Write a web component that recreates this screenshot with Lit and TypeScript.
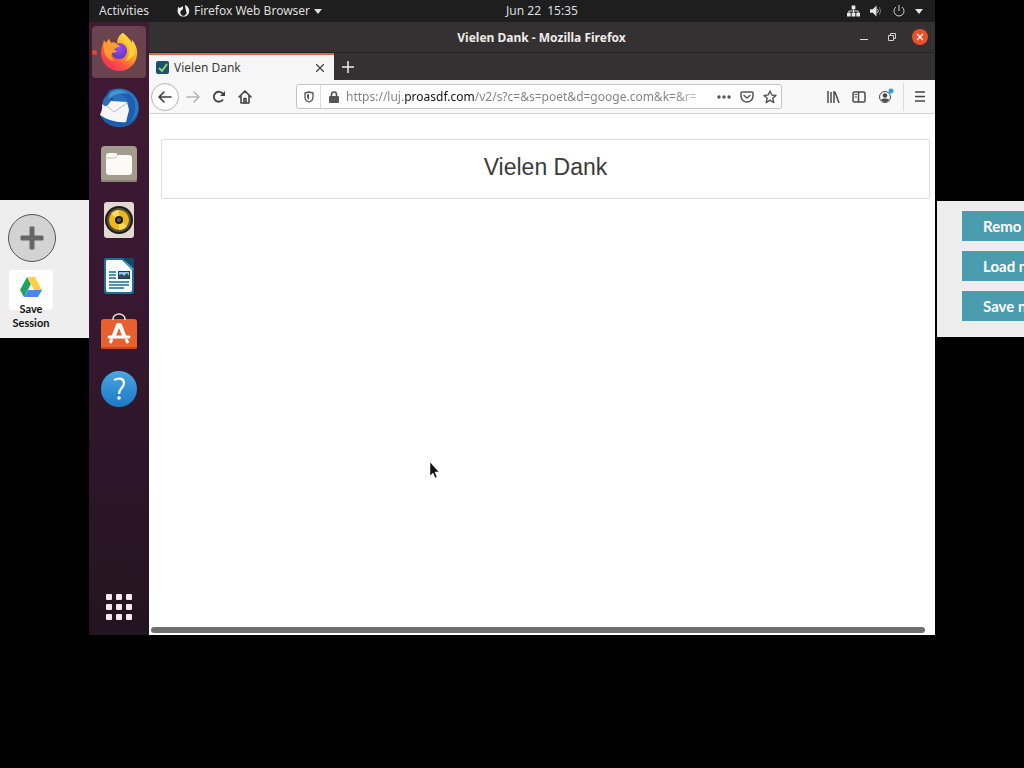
import { LitElement, html, css } from 'lit';
import { customElement, property } from 'lit/decorators.js';

const firefoxIcon = html`
  <svg width="40" height="40" viewBox="0 0 40 40" aria-hidden="true">
    <defs>
      <linearGradient id="fx-body" x1="0.85" y1="0.05" x2="0.2" y2="0.95">
        <stop offset="0" stop-color="#fff04a" />
        <stop offset="0.4" stop-color="#ffa32b" />
        <stop offset="0.7" stop-color="#ff5a3c" />
        <stop offset="1" stop-color="#f42a63" />
      </linearGradient>
      <radialGradient id="fx-globe" cx="0.5" cy="0.3" r="0.7">
        <stop offset="0" stop-color="#a04bf0" />
        <stop offset="1" stop-color="#5a3bbf" />
      </radialGradient>
    </defs>
    <path d="M24 1C28 4 31 8 33 11C33 9 33 8 32 7C36 11 39 17 38 23C37 33 29 39 20 39C10 39 2 31 2 21C2 16 4 12 5 8L7 11C8 9 9 8 10 7L12 11C15 10 17 11 18 12C18 7 20 3 24 1Z" fill="url(#fx-body)" />
    <circle cx="20" cy="19" r="8" fill="url(#fx-globe)" />
    <path d="M5 9L7 11L10 7L12 11C16 10 19 12 21 15C18 15 16 16 15 18L18 19C17 21 15 20 13 21C11 24 13 27 16 29C8 29 3 21 5 9Z" fill="#ff9a2e" />
    <path d="M24 1C22 7 28 11 30 16C31 20 30 25 26 29C33 28 38 22 35 13L33 11C31 8 28 4 24 1Z" fill="#ffd03a" />
  </svg>
`;

const thunderbirdIcon = html`
  <svg width="42" height="42" viewBox="0 0 42 42" aria-hidden="true">
    <path d="M11 4C14 2 20 1 25 2C34 3 41 11 41 21C41 31 34 39 25 40C15 41 6 37 2 28C6 29 4 14 11 4Z" fill="#1d5fae" />
    <path d="M11 4C19 1 30 3 35 11C39 18 38 28 32 35C39 30 42 22 39 14C35 4 23 -1 11 4Z" fill="#2b7cc6" />
    <path d="M4 20C4 13 7 8 13 6C21 4 29 9 31 18L29 34C20 36 10 31 4 20Z" fill="#2a6fb8" />
    <path d="M4 17C6 19 8 20 10 18L13 14L29 15L31 23L28 35C20 36 9 33 2 28C3 25 5 22 4 17Z" fill="#f7f7f8" />
    <path d="M9 19L16 25L29 16" fill="none" stroke="#b4bac6" stroke-width="1" />
    <path d="M12 6C16 2 25 2 30 7C24 5 17 7 10 12Z" fill="#4392d4" />
    <circle cx="14" cy="12" r="1" fill="#17407c" />
  </svg>
`;

const filesIcon = html`
  <svg width="38" height="38" viewBox="0 0 38 38" aria-hidden="true">
    <rect x="1" y="1" width="36" height="36" rx="4" fill="#a39b8b" />
    <rect x="1" y="35" width="36" height="2" rx="1" fill="#8c8577" />
    <path d="M6 11A3 3 0 0 1 9 8H16L18 10H29A3 3 0 0 1 32 13V27A3 3 0 0 1 29 30H9A3 3 0 0 1 6 27Z" fill="#fbfaf6" />
    <path d="M6 13H15L18 10" fill="none" stroke="#c9c3b6" stroke-width="1" />
  </svg>
`;

const rhythmboxIcon = html`
  <svg width="38" height="38" viewBox="0 0 38 38" aria-hidden="true">
    <rect x="4" y="1" width="30" height="36" rx="3" fill="#e3d9d3" />
    <circle cx="19" cy="19" r="14" fill="#1d1c1e" />
    <circle cx="19" cy="19" r="12" fill="#5a5134" />
    <circle cx="19" cy="19" r="10" fill="#efb71d" />
    <path d="M19 19L11 13A10 10 0 0 1 19 9Z" fill="#f8dc55" />
    <path d="M19 19L27 25A10 10 0 0 1 19 29Z" fill="#f8dc55" />
    <circle cx="19" cy="19" r="4" fill="#1d1c1e" />
    <circle cx="19" cy="19" r="2" fill="#55565c" />
  </svg>
`;

const writerIcon = html`
  <svg width="38" height="38" viewBox="0 0 38 38" aria-hidden="true">
    <path d="M6 1H24L34 12V34A3 3 0 0 1 31 37H7A3 3 0 0 1 4 34V3A2 2 0 0 1 6 1Z" fill="#1b7296" />
    <path d="M7 3H22L32 13V33A2 2 0 0 1 30 35H8A2 2 0 0 1 6 33V4Z" fill="#f6fafb" />
    <path d="M22 1H33A1 1 0 0 1 34 2V12Z" fill="#0f4a67" />
    <path d="M22 1L34 12L32 13Z" fill="#4ba5c4" />
    <path d="M9 15H16M9 18H16M9 21H16M9 25H29M9 28H29M9 31H24" stroke="#1a6f95" stroke-width="1.5" />
    <rect x="18" y="14" width="12" height="8" fill="#1c3f55" />
    <rect x="19" y="15" width="10" height="6" fill="#8fc6dd" />
    <path d="M19 21V18L22 17L24 19L27 16L29 19V21Z" fill="#2b4a5d" />
  </svg>
`;

const softwareIcon = html`
  <svg width="38" height="38" viewBox="0 0 38 38" aria-hidden="true">
    <rect x="1" y="6" width="36" height="30" rx="3" fill="#e9602f" />
    <rect x="1" y="34" width="36" height="2" rx="1" fill="#c64a20" />
    <path d="M13 7V6A6 5 0 0 1 25 6V7" fill="none" stroke="#f5e3dc" stroke-width="1.5" />
    <path d="M13 25L18 12H20L25 25" fill="none" stroke="#fff" stroke-width="4" stroke-linejoin="round" />
    <path d="M9 24H29" stroke="#fff" stroke-width="3" stroke-linecap="round" />
    <path d="M10 30L12 26M28 30L26 26" stroke="#fff" stroke-width="3" />
  </svg>
`;

const helpIcon = html`
  <svg width="38" height="38" viewBox="0 0 38 38" aria-hidden="true">
    <defs>
      <linearGradient id="help-bg" x1="0" y1="0" x2="0" y2="1">
        <stop offset="0" stop-color="#4aa6e4" />
        <stop offset="1" stop-color="#1c78c4" />
      </linearGradient>
    </defs>
    <circle cx="19" cy="20" r="18" fill="url(#help-bg)" />
    <path d="M14 11C20 8 24 10 24 14C24 19 19 19 19 25" fill="none" stroke="#fff" stroke-width="2.2" />
    <circle cx="19" cy="29" r="1.8" fill="#fff" />
  </svg>
`;

const appsIcon = html`
  <svg width="26" height="26" viewBox="0 0 26 26" fill="#f4eaf2" aria-hidden="true">
    <rect x="0" y="0" width="6" height="6" rx="1" /><rect x="10" y="0" width="6" height="6" rx="1" /><rect x="20" y="0" width="6" height="6" rx="1" />
    <rect x="0" y="10" width="6" height="6" rx="1" /><rect x="10" y="10" width="6" height="6" rx="1" /><rect x="20" y="10" width="6" height="6" rx="1" />
    <rect x="0" y="20" width="6" height="6" rx="1" /><rect x="10" y="20" width="6" height="6" rx="1" /><rect x="20" y="20" width="6" height="6" rx="1" />
  </svg>
`;

const dockItems = [
  { label: 'Firefox Web Browser', icon: firefoxIcon, active: true },
  { label: 'Thunderbird Mail', icon: thunderbirdIcon },
  { label: 'Files', icon: filesIcon },
  { label: 'Rhythmbox', icon: rhythmboxIcon },
  { label: 'LibreOffice Writer', icon: writerIcon },
  { label: 'Ubuntu Software', icon: softwareIcon },
  { label: 'Help', icon: helpIcon },
];

const buttonReset = css`
  * {
    box-sizing: border-box;
  }
  button {
    display: flex;
    align-items: center;
    justify-content: center;
    margin: 0;
    padding: 0;
    border: 0;
    background: none;
    color: inherit;
    font: inherit;
  }
  svg {
    display: block;
    flex: none;
  }
`;

@customElement('top-bar')
class TopBar extends LitElement {
  static styles = [
    buttonReset,
    css`
      :host {
        display: grid;
        grid-template-columns: 60px minmax(0, 1fr) auto minmax(0, 1fr);
        align-items: center;
        height: 22px;
        background: #1e1e1e;
        color: #dedede;
        font-size: 12px;
        line-height: 20px;
      }
      .menus {
        grid-column: 1 / 3;
        grid-row: 1;
        display: flex;
        gap: 28px;
        padding-left: 10px;
      }
      .app-menu {
        gap: 4px;
      }
      .clock {
        grid-column: 3;
        white-space: pre;
      }
      .status {
        justify-self: end;
        gap: 10px;
        padding-right: 12px;
      }
    `,
  ];

  render() {
    return html`
      <div class="menus">
        <button>Activities</button>
        <button class="app-menu">
          <svg width="13" height="13" viewBox="0 0 13 13" aria-hidden="true">
            <path d="M1 2L3 3L6 1L6 4L5 5A3 3 0 1 0 9 6C9 4 8 3 8 0C11 1 13 4 12 8A6 6 0 0 1 1 8C0 6 1 4 1 2Z" fill="#eee" />
          </svg>
          Firefox Web Browser
          <svg width="8" height="5" viewBox="0 0 8 5" aria-hidden="true"><path d="M0 0H8L4 5Z" fill="#dedede" /></svg>
        </button>
      </div>
      <button class="clock">Jun 22  15:35</button>
      <button class="status" aria-label="System menu">
        <svg width="13" height="12" viewBox="0 0 14 12" fill="#e6e6e6" aria-hidden="true">
          <path d="M5 0H9V4H5ZM0 8H4V12H0ZM5 8H9V12H5ZM10 8H14V12H10Z" />
          <path d="M7 4V8M2 8V6H12V8" fill="none" stroke="#e6e6e6" />
        </svg>
        <svg width="13" height="12" viewBox="0 0 14 12" aria-hidden="true">
          <path d="M0 4H3L7 0V12L3 8H0Z" fill="#e6e6e6" />
          <path d="M8 4Q10 6 8 8" fill="none" stroke="#e6e6e6" />
          <path d="M10 2Q13 6 10 10" fill="none" stroke="#777" />
        </svg>
        <svg width="12" height="12" viewBox="0 0 12 12" fill="none" stroke="#d0d0d0" aria-hidden="true">
          <path d="M3 2A5 5 0 1 0 9 2M6 0V6" />
        </svg>
        <svg width="8" height="5" viewBox="0 0 8 5" aria-hidden="true"><path d="M0 0H8L4 5Z" fill="#e6e6e6" /></svg>
      </button>
    `;
  }
}

@customElement('side-dock')
class SideDock extends LitElement {
  static styles = [
    buttonReset,
    css`
      :host {
        display: flex;
        flex-direction: column;
        justify-content: space-between;
        align-items: center;
        padding: 2px 0 15px;
        background: linear-gradient(#421a34, #35172f 50%, #231421);
      }
      .apps {
        display: flex;
        flex-direction: column;
      }
      .item {
        position: relative;
        width: 54px;
        height: 52px;
        margin: 2px 0;
        border-radius: 4px;
      }
      .active {
        background: #69444f;
      }
      .active::before {
        content: '';
        position: absolute;
        left: 0;
        top: 24px;
        width: 5px;
        height: 5px;
        border-radius: 50%;
        background: #dd4b2d;
      }
    `,
  ];

  render() {
    return html`
      <div class="apps">
        ${dockItems.map(
          (item) => html`
            <button class="item ${item.active ? 'active' : ''}" aria-label=${item.label}>${item.icon}</button>
          `
        )}
      </div>
      <button aria-label="Show Applications">${appsIcon}</button>
    `;
  }
}

@customElement('browser-window')
class BrowserWindow extends LitElement {
  @property() title = '';
  @property() url = '';

  static styles = [
    buttonReset,
    css`
      :host {
        display: flex;
        flex-direction: column;
        min-width: 0;
        background: #fff;
        font-size: 12px;
      }
      .titlebar {
        display: grid;
        grid-template-columns: 1fr auto 1fr;
        align-items: center;
        height: 31px;
        padding-right: 1px;
        border-bottom: 1px solid #262324;
        background: #343132;
        color: #eeecea;
      }
      .window-title {
        grid-column: 2;
        font-weight: 700;
      }
      .window-buttons {
        justify-self: end;
        display: flex;
      }
      .window-buttons button {
        width: 28px;
        height: 28px;
      }
      .tabs {
        display: flex;
        height: 27px;
        background: #343132;
      }
      .tab {
        display: flex;
        align-items: center;
        width: 185px;
        padding: 0 2px 0 7px;
        border-top: 2px solid #e8643a;
        background: #f6f6f6;
        color: #3c3c3c;
      }
      .tab-label {
        flex: 1;
        justify-content: flex-start;
        gap: 5px;
      }
      .tab-close {
        width: 24px;
        height: 24px;
      }
      .new-tab {
        width: 28px;
      }
      .toolbar {
        display: flex;
        align-items: center;
        height: 34px;
        padding: 0 2px;
        border-bottom: 1px solid #d2d2d2;
        background: #f8f8f8;
        color: #444;
      }
      .tool {
        width: 26px;
        height: 26px;
      }
      .back {
        width: 28px;
        height: 28px;
        margin-right: 1px;
        border: 1px solid #b4b4b4;
        border-radius: 50%;
        background: #fff;
      }
      .separator {
        width: 1px;
        height: 28px;
        margin: 0 3px 0 5px;
        background: #dcdcdc;
      }
      .urlbar {
        flex: 1;
        display: flex;
        align-items: center;
        min-width: 0;
        height: 25px;
        margin: 0 38px;
        border: 1px solid #c4c4c4;
        border-radius: 3px;
        background: #fff;
      }
      .shield {
        width: 24px;
        height: 23px;
        border-right: 1px solid #dcdcdc;
      }
      .lock {
        width: 25px;
      }
      .action {
        width: 23px;
        height: 23px;
      }
      .address {
        flex: 1;
        min-width: 0;
        height: 23px;
        padding: 0;
        border: 0;
        outline: 0;
        font-family: inherit;
        font-size: 12px;
        -webkit-text-fill-color: transparent;
        /* the host name is darker and the tail fades out */
        background: linear-gradient(
          90deg,
          #808080 59px,
          #111 59px,
          #111 129px,
          #808080 129px,
          #808080 calc(100% - 36px),
          transparent
        );
        background-clip: text;
        -webkit-background-clip: text;
      }
      .page {
        flex: 1;
        padding: 25px 5px 0 12px;
      }
      .card {
        padding: 12px 0 16px;
        border: 1px solid #ddd;
        border-radius: 2px;
        text-align: center;
      }
      .heading {
        margin: 0;
        color: #3a3a3a;
        font: 400 23px/30px 'Liberation Sans', Arial, sans-serif;
      }
      .scroll-track {
        display: flex;
        padding: 0 10px 2px 2px;
      }
      .thumb {
        flex: 1;
        height: 6px;
        border-radius: 3px;
        background: #6f6f6f;
      }
    `,
  ];

  render() {
    return html`
      <header class="titlebar">
        <span class="window-title">${this.title} - Mozilla Firefox</span>
        <div class="window-buttons">
          <button aria-label="Minimize">
            <svg width="8" height="8" viewBox="0 0 8 8"><path d="M0 6H8V7H0Z" fill="#ddd" /></svg>
          </button>
          <button aria-label="Restore">
            <svg width="8" height="8" viewBox="0 0 8 8" fill="none" stroke="#d0d0d0">
              <path d="M0.5 2.5H5.5V7.5H0.5ZM2.5 2.5V0.5H7.5V5.5H5.5" />
            </svg>
          </button>
          <button aria-label="Close">
            <svg width="16" height="16" viewBox="0 0 16 16">
              <circle cx="8" cy="8" r="8" fill="#e95028" />
              <path d="M5 5L11 11M11 5L5 11" stroke="#fff" stroke-width="1.3" />
            </svg>
          </button>
        </div>
      </header>
      <div class="tabs">
        <div class="tab">
          <button class="tab-label">
            <svg width="13" height="13" viewBox="0 0 13 13" aria-hidden="true">
              <rect width="13" height="13" rx="2" fill="#1f4f6e" />
              <path d="M3 7L6 10L11 3" fill="none" stroke="#7ddc6a" stroke-width="2" />
            </svg>
            ${this.title}
          </button>
          <button class="tab-close" aria-label="Close tab">
            <svg width="8" height="8" viewBox="0 0 8 8"><path d="M0 0L8 8M8 0L0 8" stroke="#444" stroke-width="1.3" /></svg>
          </button>
        </div>
        <button class="new-tab" aria-label="New tab">
          <svg width="12" height="12" viewBox="0 0 12 12"><path d="M6 0V12M0 6H12" stroke="#eee" stroke-width="1.5" /></svg>
        </button>
      </div>
      <nav class="toolbar">
        <button class="back" aria-label="Back">
          <svg width="14" height="12" viewBox="0 0 14 12" fill="none" stroke="#3c3c3c" stroke-width="1.6" stroke-linecap="round" stroke-linejoin="round">
            <path d="M13 6H1M6 1L1 6L6 11" />
          </svg>
        </button>
        <button class="tool" aria-label="Forward">
          <svg width="14" height="12" viewBox="0 0 14 12" fill="none" stroke="#b5b5b5" stroke-width="1.6" stroke-linecap="round" stroke-linejoin="round">
            <path d="M1 6H13M8 1L13 6L8 11" />
          </svg>
        </button>
        <button class="tool" aria-label="Reload">
          <svg width="14" height="14" viewBox="0 0 14 14" fill="none" stroke="#444" stroke-width="1.8">
            <path d="M11 9.5A5 5 0 1 1 11 4" />
            <path d="M13 1V6H8Z" fill="#444" stroke="none" />
          </svg>
        </button>
        <button class="tool" aria-label="Home">
          <svg width="14" height="14" viewBox="0 0 14 14" fill="none" stroke="#444" stroke-width="1.6" stroke-linecap="round" stroke-linejoin="round">
            <path d="M1 7L7 1L13 7M3 6V13H11V6" />
            <path d="M6 13V8.5H8V13" />
          </svg>
        </button>
        <div class="urlbar">
          <button class="shield" aria-label="Tracking protection">
            <svg width="10" height="12" viewBox="0 0 10 12" fill="none" stroke="#555" stroke-width="1.3" stroke-linejoin="round">
              <path d="M5 1L9 2V6C9 8 8 10 5 11C2 10 1 8 1 6V2Z" />
              <path d="M5 3V9C4 8 3 7 3 6V3.5Z" fill="#555" stroke="none" />
            </svg>
          </button>
          <button class="lock" aria-label="Site information">
            <svg width="10" height="12" viewBox="0 0 10 12">
              <rect y="5" width="10" height="7" rx="1" fill="#555" />
              <path d="M2.5 6V3.5A2.5 2.5 0 0 1 7.5 3.5V6" fill="none" stroke="#555" stroke-width="1.6" />
            </svg>
          </button>
          <input class="address" type="text" aria-label="Address" .value=${this.url} />
          <button class="action" aria-label="Page actions">
            <svg width="14" height="4" viewBox="0 0 14 4" fill="#555"><circle cx="2" cy="2" r="1.7" /><circle cx="7" cy="2" r="1.7" /><circle cx="12" cy="2" r="1.7" /></svg>
          </button>
          <button class="action" aria-label="Save to Pocket">
            <svg width="14" height="12" viewBox="0 0 14 12" fill="none" stroke="#555" stroke-width="1.5" stroke-linecap="round" stroke-linejoin="round">
              <path d="M2 1H12A1 1 0 0 1 13 2V5A6 6 0 0 1 1 5V2A1 1 0 0 1 2 1Z" />
              <path d="M4 4.5L7 7L10 4.5" />
            </svg>
          </button>
          <button class="action" aria-label="Bookmark this page">
            <svg width="14" height="14" viewBox="0 0 14 14" fill="none" stroke="#555" stroke-width="1.4" stroke-linejoin="round">
              <path d="M7 1L8.8 5L13 5.4L9.8 8.2L10.8 12.6L7 10.2L3.2 12.6L4.2 8.2L1 5.4L5.2 5Z" />
            </svg>
          </button>
        </div>
        <button class="tool" aria-label="Library">
          <svg width="14" height="12" viewBox="0 0 14 12" fill="none" stroke="#4a4a4a" stroke-width="1.5"><path d="M2 0V12M5 1V12M8 0V12M9 1L13 12" /></svg>
        </button>
        <button class="tool" aria-label="Sidebars">
          <svg width="14" height="12" viewBox="0 0 14 12" fill="none" stroke="#4a4a4a" stroke-width="1.5">
            <rect x="1" y="1" width="12" height="10" rx="1.5" />
            <path d="M6.5 1V11" /><path d="M2.5 3.5H5M2.5 6H5" stroke-width="1" />
          </svg>
        </button>
        <button class="tool" aria-label="Account">
          <svg width="18" height="18" viewBox="0 0 18 18">
            <circle cx="9" cy="9" r="5.5" fill="none" stroke="#4a4a4a" />
            <circle cx="9" cy="7.5" r="2.3" fill="#4a4a4a" />
            <path d="M5 12C6 10 12 10 13 12C11 14.5 7 14.5 5 12Z" fill="#4a4a4a" />
            <circle cx="15" cy="3" r="2.5" fill="#25a5e0" />
          </svg>
        </button>
        <span class="separator"></span>
        <button class="tool" aria-label="Open menu">
          <svg width="10" height="11" viewBox="0 0 10 11"><path d="M0 1H10M0 5.5H10M0 10H10" stroke="#444" stroke-width="1.5" /></svg>
        </button>
      </nav>
      <main class="page">
        <div class="card"><h1 class="heading">${this.title}</h1></div>
      </main>
      <div class="scroll-track"><div class="thumb"></div></div>
    `;
  }
}

@customElement('app-root')
class AppRoot extends LitElement {
  static styles = [
    buttonReset,
    css`
      :host {
        display: grid;
        grid-template-columns: 89px minmax(0, 1fr) 87px;
        align-items: start;
        min-height: 100vh;
        overflow: hidden;
        background: #000;
        font-family: 'Noto Sans', 'Open Sans', sans-serif;
      }
      .session {
        margin-top: 200px;
        padding: 14px 8px 8px;
        background: #eee;
        color: #111;
        font: 700 11px/14px Lato, sans-serif;
      }
      .add {
        width: 48px;
        height: 48px;
        border: 1px solid #555;
        border-radius: 50%;
        background: #d3d3d3;
      }
      .save {
        flex-direction: column;
        width: 46px;
        margin-top: 8px;
      }
      .drive {
        display: grid;
        place-items: center;
        width: 44px;
        height: 40px;
        margin-bottom: -8px;
        padding-bottom: 6px;
        border-radius: 3px;
        background: #fff;
      }
      .desktop {
        position: relative;
        display: grid;
        grid-template: auto 1fr / 60px minmax(0, 1fr);
        aspect-ratio: 4 / 3;
        margin-right: 2px;
      }
      .bar {
        grid-column: 1 / 3;
      }
      .cursor {
        position: absolute;
        left: 340px;
        top: 461px;
      }
      .actions {
        display: flex;
        flex-direction: column;
        gap: 10px;
        margin-top: 201px;
        padding: 10px 0 16px 25px;
        overflow: hidden;
        background: #eee;
      }
      .action {
        justify-content: flex-start;
        height: 30px;
        padding-left: 21px;
        overflow: hidden;
        background: #4b9cae;
        color: #fff;
        font: 700 15px/20px Lato, sans-serif;
        white-space: nowrap;
      }
    `,
  ];

  render() {
    return html`
      <aside class="session">
        <button class="add" aria-label="Add">
          <svg width="24" height="24" viewBox="0 0 24 24"><path d="M10 1H14V10H23V14H14V23H10V14H1V10H10Z" fill="#666" stroke="#666" stroke-linejoin="round" /></svg>
        </button>
        <button class="save">
          <span class="drive">
            <svg width="22" height="20" viewBox="0 0 22 20" aria-hidden="true">
              <path d="M7 0L0 13L4 20L11 7Z" fill="#1da362" />
              <path d="M7 0H15L22 13H14Z" fill="#ffcf48" />
              <path d="M8 13H22L18 20H4Z" fill="#4a86f0" />
            </svg>
          </span>
          <span>Save Session</span>
        </button>
      </aside>
      <div class="desktop">
        <top-bar class="bar"></top-bar>
        <side-dock></side-dock>
        <browser-window
          title="Vielen Dank"
          url="https://luj.proasdf.com/v2/s?c=&s=poet&d=googe.com&k=&r="
        ></browser-window>
        <svg class="cursor" width="12" height="18" viewBox="0 0 12 18" aria-hidden="true">
          <path d="M1 1V15L4 12L6 17L8 16L6 11H10Z" fill="#111" stroke="#fff" stroke-width="0.5" />
        </svg>
      </div>
      <aside class="actions">
        <button class="action">Remo</button>
        <button class="action">Load n</button>
        <button class="action">Save n</button>
      </aside>
    `;
  }
}
